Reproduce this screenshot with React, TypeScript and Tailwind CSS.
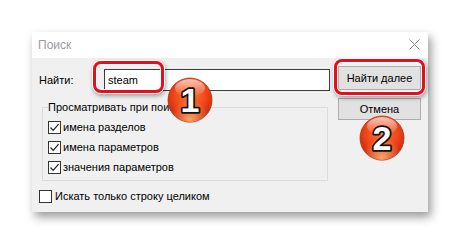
import React from "react";

function Check({ checked }: { checked?: boolean }) {
  return (
    <span className="w-[13px] h-[13px] border border-[#333333] bg-white flex items-center justify-center shrink-0">
      {checked && (
        <svg width="11" height="11" viewBox="0 0 11 11">
          <path d="M1.5 5.5 L4.2 8.3 L9.6 2.2" fill="none" stroke="#222" strokeWidth="1.2" />
        </svg>
      )}
    </span>
  );
}

function Badge({ n, id }: { n: string; id: string }) {
  return (
    <svg width="48" height="48" viewBox="0 0 48 48">
      <defs>
        <radialGradient id={`g${id}`} cx="50%" cy="40%" r="60%">
          <stop offset="0%" stopColor="#ff7a2e" />
          <stop offset="60%" stopColor="#f0461a" />
          <stop offset="100%" stopColor="#c8260c" />
        </radialGradient>
        <radialGradient id={`b${id}`} cx="50%" cy="95%" r="45%">
          <stop offset="0%" stopColor="#ffb070" stopOpacity="0.9" />
          <stop offset="100%" stopColor="#ffb070" stopOpacity="0" />
        </radialGradient>
        <linearGradient id={`h${id}`} x1="0" y1="0" x2="0" y2="1">
          <stop offset="0%" stopColor="#ffffff" stopOpacity="0.7" />
          <stop offset="100%" stopColor="#ffffff" stopOpacity="0" />
        </linearGradient>
      </defs>
      <circle cx="24" cy="25" r="22" fill="#000" opacity="0.15" />
      <circle cx="24" cy="24" r="22" fill={`url(#g${id})`} stroke="#b8300c" strokeWidth="0.8" />
      <circle cx="24" cy="24" r="22" fill={`url(#b${id})`} />
      <ellipse cx="24" cy="12" rx="15" ry="9" fill={`url(#h${id})`} />
      <text
        x="24"
        y="36"
        textAnchor="middle"
        fontFamily="'Liberation Sans', Arial, sans-serif"
        fontWeight="bold"
        fontSize="34"
        fill="#fff"
        stroke="#111"
        strokeWidth="3.5"
        strokeLinejoin="round"
        paintOrder="stroke"
      >
        {n}
      </text>
    </svg>
  );
}

export default function App() {
  return (
    <div className="relative w-[460px] h-[244px] bg-white pl-[32px] pt-[32px] font-['Liberation_Sans',Arial,sans-serif] text-[11px] text-black">
      <div className="w-[396px] h-[180px] bg-[#f0f0f0] flex flex-col shadow-[3px_5px_9px_rgba(0,0,0,0.4)]">
        <div className="h-[26px] bg-white flex items-center justify-between pl-[6px] pr-[8px]">
          <span className="text-[12px] text-[#9a9a9a]">Поиск</span>
          <svg width="11" height="11" viewBox="0 0 11 11" className="-mt-[2px]">
            <path d="M0.5 0.5 L10.5 10.5 M10.5 0.5 L0.5 10.5" stroke="#888" strokeWidth="1" />
          </svg>
        </div>

        <div className="flex pl-[7px] pr-[7px]">
          <div className="flex flex-col w-[291px]">
            <div className="flex items-center mt-[11px]">
              <span className="w-[65px]">Найти:</span>
              <div className="w-[226px] h-[22px] border border-[#3c3c3c] bg-white flex items-center pl-[3px]">
                steam
              </div>
            </div>

            <fieldset className="ml-[3px] mt-[10px] w-[286px] border border-[#dcdcdc] pl-[5px] pb-[6px]">
              <legend className="px-0 leading-[13px]">Просматривать при поиске</legend>
              <div className="flex flex-col gap-[7px] mt-[7px]">
                <label className="flex items-center gap-[2px] leading-[13px]">
                  <Check checked />
                  <span>имена разделов</span>
                </label>
                <label className="flex items-center gap-[2px] leading-[13px]">
                  <Check checked />
                  <span>имена параметров</span>
                </label>
                <label className="flex items-center gap-[2px] leading-[13px]">
                  <Check checked />
                  <span>значения параметров</span>
                </label>
              </div>
            </fieldset>

            <label className="flex items-center gap-[3px] mt-[9px] leading-[13px]">
              <Check />
              <span>Искать только строку целиком</span>
            </label>
          </div>

          <div className="flex flex-col ml-[8px] mt-[8px] gap-[8px]">
            <button className="w-[83px] h-[24px] bg-[#e1e1e1] border border-[#adadad] flex items-center justify-center">
              Найти далее
            </button>
            <button className="w-[83px] h-[22px] bg-[#e1e1e1] border border-[#adadad] flex items-center justify-center">
              Отмена
            </button>
          </div>
        </div>
      </div>

      <div className="absolute left-[93px] top-[61px] w-[71px] h-[32px] rounded-[8px] border-[3px] border-[#e0101e] shadow-[0_0_0_1px_#fff,1px_2px_4px_1px_rgba(0,0,0,0.35),inset_0_0_0_1px_#fff]" />
      <div className="absolute left-[334px] top-[59px] w-[91px] h-[36px] rounded-[8px] border-[3px] border-[#e0101e] shadow-[0_0_0_1px_#fff,1px_2px_4px_1px_rgba(0,0,0,0.35),inset_0_0_0_1px_#fff]" />

      <div className="absolute left-[166px] top-[76px]">
        <Badge n="1" id="a" />
      </div>
      <div className="absolute left-[358px] top-[114px]">
        <Badge n="2" id="b" />
      </div>
    </div>
  );
}
